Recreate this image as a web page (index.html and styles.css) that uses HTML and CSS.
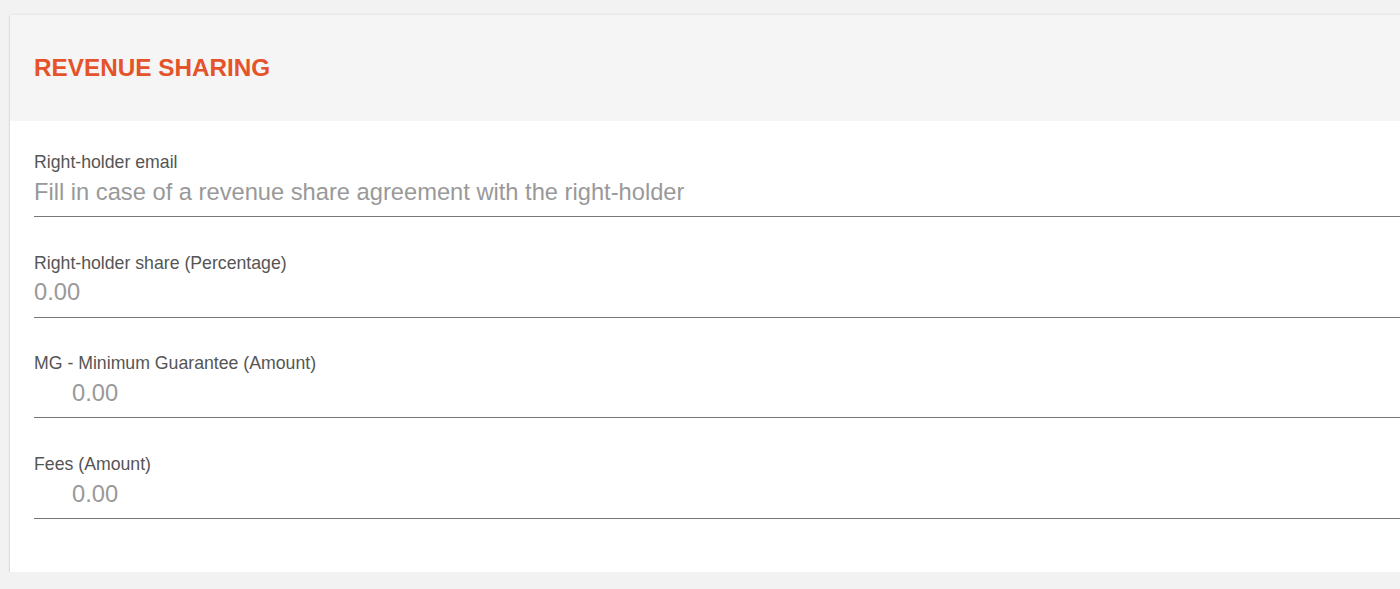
FILE: index.html
```html
<!DOCTYPE html>
<html lang="en">

<head>
    <meta charset="UTF-8">
    <meta name="viewport" content="width=device-width, initial-scale=1.0">
    <title>Revenue Sharing</title>
    <link rel="stylesheet" href="styles.css">
</head>

<body>
    <div class="card">
        <div class="card-header">
            <h2>REVENUE SHARING</h2>
        </div>

        <div class="card-body">
            <div class="field">
                <label for="rhEmail">Right-holder email</label>
                <input id="rhEmail" type="email" placeholder="Fill in case of a revenue share agreement with the right-holder">
            </div>

            <div class="field">
                <label for="rhShare">Right-holder share (Percentage)</label>
                <input id="rhShare" type="text" placeholder="0.00">
            </div>

            <div class="field">
                <label for="mgAmount">MG - Minimum Guarantee (Amount)</label>
                <input id="mgAmount" class="amount" type="text" placeholder="0.00">
            </div>

            <div class="field">
                <label for="feesAmount">Fees (Amount)</label>
                <input id="feesAmount" class="amount" type="text" placeholder="0.00">
            </div>
        </div>
    </div>
</body>

</html>
```

FILE: styles.css
```css
html,
body {
    overflow: hidden;
}

body {
    font-family: "Liberation Sans", Arial, sans-serif;
    margin: 0;
    padding: 15px 0 0 10px;
    background-color: #f2f2f2;
}

.card {
    width: 1420px;
    background: white;
    box-shadow: 0 2px 1px rgba(0, 0, 0, 0.28), 0 0 3px rgba(0, 0, 0, 0.1);
}

.card-header {
    background-color: #f5f5f5;
    height: 106px;
    padding: 0 24px;
    display: flex;
    align-items: center;
}

.card-header h2 {
    margin: 0;
    font-size: 24.3px;
    font-weight: bold;
    color: #e4532a;
}

.card-body {
    padding: 30px 0 53px 24px;
}

.field {
    display: flex;
    flex-direction: column;
    border-bottom: 1px solid #777;
    margin-bottom: 34.7px;
}

.field:last-child {
    margin-bottom: 0;
}

.field label {
    font-size: 17.7px;
    color: #555;
    line-height: 22px;
}

.field input {
    border: none;
    outline: none;
    background: transparent;
    font-family: inherit;
    font-size: 23.7px;
    color: #333;
    padding: 0 0 5px 0;
    height: 43px;
    box-sizing: border-box;
}

.field input.amount {
    padding-left: 38px;
}

.field input::placeholder {
    color: #999;
}
```
